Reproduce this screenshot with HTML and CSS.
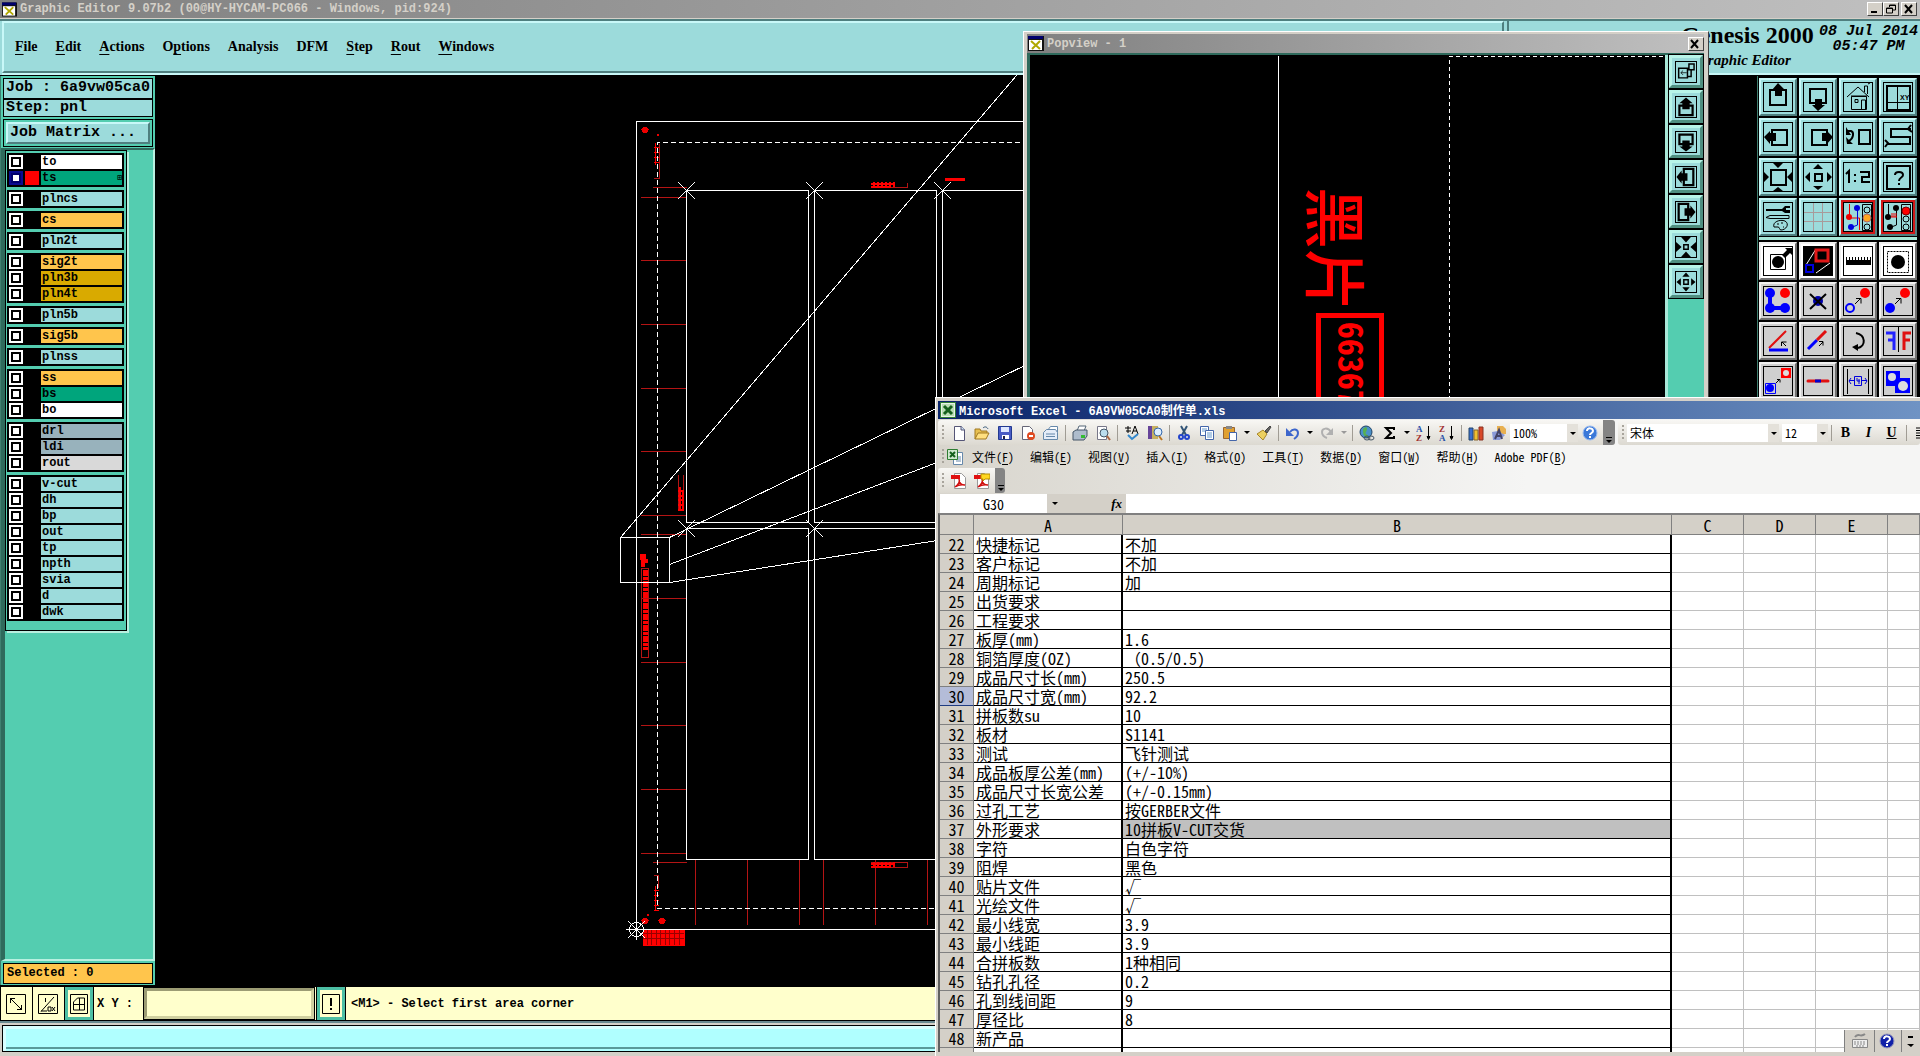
FILE: index.html
```html
<!DOCTYPE html>
<html lang="zh-CN">
<head>
    <meta charset="UTF-8">
    <title>Graphic Editor 9.07b2</title>
    <link rel="stylesheet" href="styles.css">
</head>
<body>
    <!-- shared icon shapes -->
    <svg class="defs" width="0" height="0">
        <symbol id="up" viewBox="0 0 30 30"><path d="M7 8h16v15H7z" fill="none" stroke="#000" stroke-width="2"/><path d="M15 1l7 7h-3v6h-7V8H9z"/></symbol>
        <symbol id="down" viewBox="0 0 30 30"><path d="M7 7h16v14H7z" fill="none" stroke="#000" stroke-width="2"/><path d="M15 29l7-6h-3v-6h-7v6H9z"/></symbol>
        <symbol id="left" viewBox="0 0 30 30"><path d="M9 8h15v15H9z" fill="none" stroke="#000" stroke-width="2"/><path d="M1 15l6-6v2h6v8H7v3z"/></symbol>
        <symbol id="right" viewBox="0 0 30 30"><path d="M9 8h15v15H9z" fill="none" stroke="#000" stroke-width="2"/><path d="M30 15l-6-6v2h-5v8h5v3z"/></symbol>
        <symbol id="zoomin" viewBox="0 0 30 30"><path d="M8 8h15v15H8z" fill="none" stroke="#000" stroke-width="2"/><path d="M10 1h10l-5 5zM10 29h10l-5-4zM1 10v10l5-5zM29 10v10l-5-5z"/></symbol>
        <symbol id="zoomout" viewBox="0 0 30 30"><path d="M12 12h7v7h-7z" fill="none" stroke="#000" stroke-width="2"/><path d="M10 7h10l-5-5zM10 24h10l-5 4zM7 10v10l-5-5zM24 10v10l5-5z"/></symbol>
        <symbol id="xwin" viewBox="0 0 16 15"><path d="M0 0h16v15H0z" fill="#111"/><path d="M0 0h15v3H0z" fill="#00006c"/><path d="M1 4h13v10H1z" fill="#fff"/><path d="M3 5l9 8M12 5l-8 8" stroke="#b0a800" stroke-width="2"/></symbol>
        <symbol id="pdf" viewBox="0 0 16 16"><path d="M3.500.500h7l4 4v11h-11z" fill="#fff" stroke="#999"/><path d="M0 2h9v4H0z" fill="#e01010"/><path d="M4 14c4-3 5-6 4-8 0 4 3 6 6 6-4-1-7 0-10 2" fill="none" stroke="#d01010" stroke-width="1.500"/></symbol>
        <symbol id="excel" viewBox="0 0 16 16"><path d="M.500.500h15v15H.500z" fill="#e8f4e8" stroke="#2e7d32"/><path d="M2 2h12v12H2z" fill="#b9dcb4"/><path d="M4 4l8 8M12 4l-8 8" stroke="#14601c" stroke-width="3"/></symbol>
    </svg>

    <header class="titlebar">
        <svg width="15" height="15"><use href="#xwin"/></svg>
        <span>Graphic Editor 9.07b2 (00@HY-HYCAM-PC066 - Windows, pid:924)</span>
        <div class="win-buttons">
            <button aria-label="Minimize"><svg width="12" height="10"><path d="M2 7h6v2H2z"/></svg></button>
            <button aria-label="Restore"><svg width="12" height="10"><path d="M4.500 3V1h6v5H8M1.500 4h6v5h-6zM1 4.500h7M4 1.500h7" fill="none" stroke="#000"/></svg></button>
            <button class="close" aria-label="Close"><svg width="12" height="10"><path d="M2 1l7 8M9 1L2 9" stroke="#000" stroke-width="2"/></svg></button>
        </div>
    </header>

    <div class="top">
        <nav class="menubar">
            <a href="#"><u>F</u>ile</a>
            <a href="#"><u>E</u>dit</a>
            <a href="#"><u>A</u>ctions</a>
            <a href="#">O<u>p</u>tions</a>
            <a href="#">Analysis</a>
            <a href="#">DFM</a>
            <a href="#"><u>S</u>tep</a>
            <a href="#"><u>R</u>out</a>
            <a href="#"><u>W</u>indows</a>
        </nav>
        <div class="brand-panel">
            <div class="brand">
                <h1>Genesis 2000</h1>
                <p>Graphic Editor</p>
            </div>
            <div class="clock">08 Jul 2014<br>05:47 PM</div>
        </div>
    </div>

    <main class="work">
        <aside class="sidebar">
            <div class="job">
                <div>Job : 6a9vw05ca0</div>
                <div>Step: pnl</div>
            </div>
            <div class="matrix"><button>Job Matrix ...</button></div>
            <div class="layers-panel">
                <div class="layers">
                    <div class="group">
                        <label class="white"><input type="checkbox"><i></i><span>to</span></label>
                        <label class="green work-layer"><input type="checkbox" checked><i></i><span>ts<b>⊞</b></span></label>
                    </div>
                    <div class="group"><label><input type="checkbox"><i></i><span>plncs</span></label></div>
                    <div class="group"><label class="orange"><input type="checkbox"><i></i><span>cs</span></label></div>
                    <div class="group"><label><input type="checkbox"><i></i><span>pln2t</span></label></div>
                    <div class="group">
                        <label class="orange"><input type="checkbox"><i></i><span>sig2t</span></label>
                        <label class="gold"><input type="checkbox"><i></i><span>pln3b</span></label>
                        <label class="gold"><input type="checkbox"><i></i><span>pln4t</span></label>
                    </div>
                    <div class="group"><label><input type="checkbox"><i></i><span>pln5b</span></label></div>
                    <div class="group"><label class="orange"><input type="checkbox"><i></i><span>sig5b</span></label></div>
                    <div class="group"><label><input type="checkbox"><i></i><span>plnss</span></label></div>
                    <div class="group">
                        <label class="orange"><input type="checkbox"><i></i><span>ss</span></label>
                        <label class="green"><input type="checkbox"><i></i><span>bs</span></label>
                        <label class="white"><input type="checkbox"><i></i><span>bo</span></label>
                    </div>
                    <div class="group">
                        <label class="steel"><input type="checkbox"><i></i><span>drl</span></label>
                        <label class="steel"><input type="checkbox"><i></i><span>ldi</span></label>
                        <label class="grey"><input type="checkbox"><i></i><span>rout</span></label>
                    </div>
                    <div class="group">
                        <label><input type="checkbox"><i></i><span>v-cut</span></label>
                        <label><input type="checkbox"><i></i><span>dh</span></label>
                        <label><input type="checkbox"><i></i><span>bp</span></label>
                        <label><input type="checkbox"><i></i><span>out</span></label>
                        <label><input type="checkbox"><i></i><span>tp</span></label>
                        <label><input type="checkbox"><i></i><span>npth</span></label>
                        <label><input type="checkbox"><i></i><span>svia</span></label>
                        <label><input type="checkbox"><i></i><span>d</span></label>
                        <label><input type="checkbox"><i></i><span>dwk</span></label>
                    </div>
                </div>
            </div>
            <div class="selected">Selected : 0</div>
        </aside>

        <div class="canvas">
            <svg width="100%" height="100%">
                <g transform="translate(-155 -75)" fill="none" stroke="#fff" shape-rendering="crispEdges">
                    <!-- red tooling marks -->
                    <g stroke="#b41414">
                        <path d="M641 197.500h45M641 260.500h45M641 324.500h45M641 388.500h45M641 451.500h45M641 515.500h45M641 534.500h45M641 598.500h45M641 662.500h45M641 725.500h45M641 789.500h45M641 853.500h45M653 187.500h34M653 862.500h34"/>
                        <path d="M695.500 860v65M747.500 860v65M799.500 860v65M823.500 860v65M875.500 860v65M927.500 860v65"/>
                        <path d="M871 187.500h36v-5M871 862.500h36v5h-36M678.500 511v-36M683.500 511v-36M641.500 568.500h7v89h-7zM654 178.500h5v-35M654 875.500h4v12"/>
                    </g>
                    <g stroke="#f00">
                        <path d="M871 183.500h24M871 186.500h20M873.500 182v5M877.500 182v5M881.500 182v5M885.500 182v5M889.500 182v5M893.500 182v5" stroke-width="2"/>
                        <path d="M871 863.500h24M871 866.500h20M873.500 862v5M877.500 862v5M881.500 862v5M885.500 862v5M889.500 862v5M893.500 862v5" stroke-width="2"/>
                        <path d="M679.500 487v24M682.500 491v20M678 490.500h6M678 495.500h6M678 499.500h6M678 504.500h6M678 509.500h6" stroke-width="2"/>
                        <path d="M945 179.500h20" stroke-width="3"/>
                        <path d="M655.500 143v22M654 147.500h5M654 152.500h5M654 157.500h5M654 162.500h5M655.500 886v25M654 890.500h5M654 895.500h5M654 900.500h5M654 905.500h5M654 910.500h5"/>
                        <path d="M645.500 570v80" stroke-width="5" stroke-dasharray="6 1 3 1"/>
                        <path d="M643 930h41v15h-41z" fill="#f00"/>
                    </g>
                    <path d="M643 933.500h41M643 938.500h41M647.500 930v15M651.500 930v15M656.500 930v15M660.500 930v15M665.500 930v15M669.500 930v15M674.500 930v15M679.500 930v15" stroke="#900"/>
                    <path d="M640 554h6v5h2v4h-3v4h-4v-7h-1z" fill="#f00" stroke="none"/>
                    <g fill="#e00" stroke="none"><circle cx="645" cy="130" r="3"/><circle cx="645" cy="921" r="3"/><circle cx="662" cy="921" r="3"/><path d="M641 129h8v1h-8zM641 920h8v1h-8zM658 920h8v1h-8zM657 134h2v2h-2zM647 914h2v2h-2z"/></g>
                    <!-- panel outline and cells -->
                    <path d="M1300 121.500H636.500v808H1300"/>
                    <path d="M1300 142.500H657.500v766H1300" stroke-dasharray="5 3"/>
                    <path d="M686.500 190.500h122v332h-122zM814.500 190.500h122v332h-122zM942.500 190.500h122v332h-122zM686.500 528.500h122v331h-122zM814.500 528.500h122v331h-122z"/>
                    <path d="M678 182l17 17M695 182l-17 17M806 182l17 17M823 182l-17 17M934 182l17 17M951 182l-17 17M678 520l17 17M695 520l-17 17M806 520l17 17M823 520l-17 17"/>
                    <path d="M620.500 537.500h49v45h-49zM620.500 537.500L1017 75M669.500 537.500L1030 363M669.500 564.500L1030 427M669.500 582.500L1030 526"/>
                    <circle cx="636.500" cy="929.500" r="7"/>
                    <path d="M626 929.500h21M636.500 919v21M628 921l17 17M645 921l-17 17"/>
                </g>
            </svg>
        </div>

        <aside class="toolbox">
            <div class="tools">
                <button aria-label="Pan up"><svg viewBox="0 0 30 30"><use href="#up"/></svg></button>
                <button aria-label="Pan down"><svg viewBox="0 0 30 30"><use href="#down"/></svg></button>
                <button aria-label="Home"><svg viewBox="0 0 30 30"><path d="M8.500 27.500v-13h15v13zM4 15L15 5l11 10M8 14h16M12 20.500h3v-3h-3zM18.500 27v-9h4v9M21.500 10V4h3v8M25 2l2-1" fill="none" stroke="#000"/></svg></button>
                <button aria-label="XY view"><svg viewBox="0 0 30 30"><path d="M4 4h23v24H4z" fill="none" stroke="#000" stroke-width="2"/><path d="M14.500 4v24M4 20.500h23" stroke="#000"/><text x="17" y="18" font-size="7">XY</text></svg></button>
                <button aria-label="Pan left"><svg viewBox="0 0 30 30"><use href="#left"/></svg></button>
                <button aria-label="Pan right"><svg viewBox="0 0 30 30"><use href="#right"/></svg></button>
                <button aria-label="Previous view"><svg viewBox="0 0 30 30"><path d="M16 8h11v14H16z" fill="none" stroke="#000" stroke-width="2"/><path d="M4 9h4c3 1 3 7-2 10" fill="none" stroke="#000" stroke-width="2"/><path d="M3 5v8h5zM3 15l1 7h6z"/></svg></button>
                <button aria-label="Snake"><svg viewBox="0 0 30 30"><path d="M28 7H8v8h19v7H4M2 18l3 3-3 4M28 3l-3 4 4 3" fill="none" stroke="#000" stroke-width="2"/></svg></button>
                <button aria-label="Zoom in"><svg viewBox="0 0 30 30"><use href="#zoomin"/></svg></button>
                <button aria-label="Zoom out"><svg viewBox="0 0 30 30"><use href="#zoomout"/></svg></button>
                <button aria-label="Zoom 1:2"><svg viewBox="0 0 30 30"><path d="M3 12l3-3v12M12 12v2M12 18v2M17 10h9v5h-7v5h8" fill="none" stroke="#000" stroke-width="2"/></svg></button>
                <button aria-label="Help"><svg viewBox="0 0 30 30"><path d="M4 4h23v23H4z" fill="none" stroke="#000" stroke-width="2"/><path d="M12 13c0-4 8-4 8 0 0 3-4 2-4 6M16 21v2" fill="none" stroke="#000" stroke-width="2"/></svg></button>
                <button aria-label="Options"><svg viewBox="0 0 30 30"><path d="M3 7h16l3-3h5v2h-4v2h4v3h-5l-3-2H3z"/><path d="M3 15.500l4-2h19v3H7zM11 25c-2-5 6-8 11-6 5 3 1 9-4 9-2 0-1-3-3-3zM14 22h2M18 21h2M20 25h1" fill="none" stroke="#000"/></svg></button>
                <button aria-label="Grid"><svg viewBox="0 0 30 30"><path d="M10.500 1v28M19.500 1v28M1 10.500h28M1 19.500h28" stroke="#a89a9a"/></svg></button>
                <button class="alert" aria-label="Snap"><svg viewBox="0 0 30 30"><path d="M6.500 2v14h10v12" fill="none" stroke="#e00"/><path d="M14.500 6v17l-5 2" fill="none" stroke="#00d"/><circle cx="6" cy="15" r="3" fill="#e00"/><circle cx="14" cy="6" r="3" fill="#00d"/><circle cx="8" cy="25" r="3" fill="#00d"/><path d="M19.500 2.500h9v26h-9z" fill="none" stroke="#000"/><circle cx="24" cy="8" r="3" fill="none" stroke="#000"/><circle cx="24" cy="16" r="4" fill="#ffa820" stroke="#a66"/><circle cx="24" cy="25" r="3" fill="none" stroke="#000"/></svg></button>
                <button class="alert" aria-label="Stop"><svg viewBox="0 0 30 30"><path d="M5.500 2v12M13.500 6v17l-5 2" fill="none" stroke="#000"/><circle cx="5" cy="15" r="3"/><circle cx="13" cy="6" r="3"/><circle cx="7" cy="25" r="3"/><path d="M8 15h6M9 11v4M11 11v4M13 11v4" stroke="#e00"/><path d="M18.500 2.500h9v26h-9z" fill="none" stroke="#000"/><circle cx="23" cy="9" r="4" fill="#f00" stroke="#700"/><circle cx="23" cy="17" r="3" fill="none" stroke="#000"/><circle cx="23" cy="25" r="3" fill="none" stroke="#000"/></svg></button>
            </div>
            <div class="tools grey-tools">
                <button class="on" aria-label="Select feature"><svg viewBox="0 0 30 30"><path d="M7.500 8.500h15v15h-15z" fill="none" stroke="#000"/><circle cx="15" cy="16" r="6"/><path d="M19 9l5-5-2-2h7v7l-2-2-5 5z"/></svg></button>
                <button class="on" aria-label="Select area"><svg viewBox="0 0 30 30"><path d="M1 1h28v28H1z"/><path d="M3 19L13 3M13 27l14-10" stroke="#fff"/><path d="M13 4h12v11H13z" fill="none" stroke="#e01818" stroke-width="3"/><path d="M3 19h7v7H3z" fill="none" stroke="#00d" stroke-width="2"/></svg></button>
                <button class="on" aria-label="Measure"><svg viewBox="0 0 30 30"><path d="M3 14h25v5H3z"/><path d="M3.500 11v4M6.500 11v4M9.500 11v4M12.500 11v4M15.500 11v4M18.500 11v4M21.500 11v4M24.500 11v4M27.500 11v4" stroke="#000"/></svg></button>
                <button class="on" aria-label="Highlight"><svg viewBox="0 0 30 30"><path d="M4.500 5.500h21v21h-21z" fill="none" stroke="#000" stroke-dasharray="2 1"/><circle cx="15" cy="16" r="7"/></svg></button>
                <button aria-label="Net"><svg viewBox="0 0 30 30"><path d="M7 7v15h15" fill="none" stroke="#00f" stroke-width="4"/><g fill="#00f"><circle cx="7" cy="7" r="5"/><circle cx="7" cy="22" r="5"/><circle cx="22" cy="22" r="5"/></g><circle cx="22" cy="7" r="5" fill="#f00"/></svg></button>
                <button aria-label="Delete"><svg viewBox="0 0 30 30"><circle cx="15" cy="15" r="5" fill="#00a"/><path d="M7 8l16 15M23 8L7 23" stroke="#000" stroke-width="2"/></svg></button>
                <button aria-label="Copy"><svg viewBox="0 0 30 30"><circle cx="7" cy="22" r="4" fill="none" stroke="#00f" stroke-width="2"/><circle cx="22" cy="7" r="5" fill="#f00"/><path d="M12 18l5-5M13 12.500h5v5" fill="none" stroke="#000"/></svg></button>
                <button aria-label="Move"><svg viewBox="0 0 30 30"><circle cx="7" cy="22" r="5" fill="#00f"/><circle cx="22" cy="7" r="5" fill="#f00"/><path d="M12 18l5-5M13 12.500h5v5" fill="none" stroke="#000"/></svg></button>
                <button aria-label="Rotate"><svg viewBox="0 0 30 30"><path d="M6 22L23 5" stroke="#e01010" stroke-width="2"/><path d="M6 24h19" stroke="#00f" stroke-width="3"/><path d="M23 20l-4-4M18.500 20v-4h5" fill="none" stroke="#000"/></svg></button>
                <button aria-label="Stretch"><svg viewBox="0 0 30 30"><path d="M5 23l9-9" stroke="#00f" stroke-width="3"/><path d="M14 14l9-9" stroke="#e01010" stroke-width="3"/><path d="M16 20l4-4M16 15.500h4v4" fill="none" stroke="#000"/></svg></button>
                <button aria-label="Spin"><svg viewBox="0 0 30 30"><path d="M13 7c10 2 10 13 2 15" fill="none" stroke="#000" stroke-width="2"/><path d="M9 21l6-3v7z"/></svg></button>
                <button aria-label="Mirror"><svg viewBox="0 0 30 30"><path d="M15.500 1v25" stroke="#000"/><path d="M3 7h8v17M5 14h6" fill="none" stroke="#22f" stroke-width="3"/><path d="M28 7h-7v17M27 14h-6" fill="none" stroke="#e01010" stroke-width="3"/></svg></button>
                <button aria-label="Copy layer"><svg viewBox="0 0 30 30"><path d="M18 2h10v10H18z" fill="#f00"/><circle cx="23" cy="7" r="3" fill="#ddd"/><path d="M2.500 17.500h10v10h-10z" fill="none" stroke="#00f"/><circle cx="7" cy="22" r="4" fill="#00f"/><path d="M13 17l3-3M14 13.500h3v3" fill="none" stroke="#000"/></svg></button>
                <button aria-label="Break line"><svg viewBox="0 0 30 30"><path d="M5 15h20" stroke="#e01010" stroke-width="3" stroke-linecap="round"/><path d="M12 15h6" stroke="#00c" stroke-width="3"/></svg></button>
                <button aria-label="Distance"><svg viewBox="0 0 30 30"><path d="M4.500 3v25M25.500 3v25" stroke="#000"/><path d="M6 14.500h5M19 14.500h5M8 12l-2 3 2 3M22 12l2 3-2 3M11.500 10.500h7v9h-7zM14 12v3h3M16 13v5" fill="none" stroke="#00d"/></svg></button>
                <button aria-label="Merge"><svg viewBox="0 0 30 30"><path d="M3 5h14v7h10v15H12v-7H3z" fill="#00f"/><circle cx="9" cy="11" r="4" fill="#ddd"/><circle cx="20" cy="20" r="5" fill="#ddd"/></svg></button>
            </div>
        </aside>
    </main>

    <footer class="status">
        <button class="icon-btn" aria-label="Zoom area"><svg width="20" height="20"><path d="M.500.500h19v19H.500zM4 4l12 12M4.500 9V4.500H9M15.500 11v4.500H11" fill="none" stroke="#000"/></svg></button>
        <button class="icon-btn" aria-label="Angle"><svg width="20" height="20"><path d="M.500.500h19v19H.500zM3 17.500L16 3M3 17h6M7.500 4v4M10 13h3v4h-3zM14 13l3 4M17 13l-3 4" fill="none" stroke="#000"/></svg></button>
        <button class="icon-btn framed" aria-label="Grid"><svg width="18" height="20"><path d="M.500.500h17v19H.500zM3.500 8l4-4h7v12h-11zM3 10.500h12M9.500 4v12" fill="none" stroke="#000"/></svg></button>
        <label for="xy">X Y :</label>
        <input id="xy" type="text">
        <button class="icon-btn framed" aria-label="Warnings"><svg width="18" height="20"><path d="M.500.500h17v19H.500z" fill="none" stroke="#000"/><path d="M8 4h2v8H8zM8 14h2v2H8z"/></svg></button>
        <output>&lt;M1&gt; - Select first area corner</output>
    </footer>
    <div class="command"><div></div></div>

    <section class="popview">
        <div class="pop-title">
            <svg width="16" height="15"><use href="#xwin"/></svg>
            <span>Popview - 1</span>
            <button aria-label="Close"><svg width="12" height="10"><path d="M2 1l7 8M9 1L2 9" stroke="#000" stroke-width="2"/></svg></button>
        </div>
        <div class="pop-body">
            <svg class="pop-canvas" width="636" height="360">
                <g transform="translate(-1030 -56)" shape-rendering="crispEdges">
                    <path d="M1278.500 57v400" stroke="#fff"/>
                    <path d="M1449.500 457V57.500H1666" fill="none" stroke="#fff" stroke-dasharray="4 3"/>
                    <path d="M1318.500 457V316.500h63V457" fill="none" stroke="#f00" stroke-width="5"/>
                </g>
                <g class="mark">
                    <text class="hei" transform="translate(281 132) rotate(90)">黑片</text>
                    <text class="num" transform="translate(308 267) rotate(90)">66367</text>
                </g>
            </svg>
            <div class="pop-tools">
                <button aria-label="Link view"><svg viewBox="0 0 30 30"><path d="M5 10h12v13H5zM19 4h7v8h-7zM17 21h5v-9" fill="none" stroke="#000" stroke-width="2"/><path d="M8 16h8M8 16l3-3M8 16l3 3" stroke="#000"/></svg></button>
                <button aria-label="Up"><svg viewBox="0 0 30 30"><path d="M6 13h18v13H6z" fill="none" stroke="#000" stroke-width="3"/><path d="M15 2l9 8h-4v8H10v-8H6z"/></svg></button>
                <button aria-label="Down"><svg viewBox="0 0 30 30"><path d="M6 5h18v13H6z" fill="none" stroke="#000" stroke-width="3"/><path d="M15 28l9-7h-4v-8H10v8H6z"/></svg></button>
                <button aria-label="Left"><svg viewBox="0 0 30 30"><path d="M12 4h13v22H12z" fill="none" stroke="#000" stroke-width="3"/><path d="M2 15l7-9v4h8v10H9v4z"/></svg></button>
                <button aria-label="Right"><svg viewBox="0 0 30 30"><path d="M5 4h13v22H5z" fill="none" stroke="#000" stroke-width="3"/><path d="M28 15l-7-9v4h-8v10h8v4z"/></svg></button>
                <button aria-label="Zoom in"><svg viewBox="0 0 30 30"><path d="M8 1h14l-7 8zM8 29h14l-7-8zM1 8v14l8-7zM29 8v14l-8-7z"/><path d="M12 12h6v6h-6z" fill="none" stroke="#000" stroke-width="2"/></svg></button>
                <button aria-label="Zoom out"><svg viewBox="0 0 30 30"><path d="M10 8h10l-5-6zM10 22h10l-5 6zM8 10v10l-6-5zM22 10v10l6-5z"/><path d="M12 12h6v6h-6z" fill="none" stroke="#000" stroke-width="2"/></svg></button>
            </div>
        </div>
    </section>

    <section class="excel">
        <div class="xl-title">
            <svg width="16" height="16"><use href="#excel"/></svg>
            <span>Microsoft Excel - 6A9VW05CA0制作单.xls</span>
        </div>
        <div class="xl-bars">
            <div class="bar-row">
                <div class="bar std">
                    <span class="grip"></span>
                    <button aria-label="New"><svg viewBox="0 0 16 16"><path d="M3.500 1.500h7l3 3v11h-10z" fill="#fff" stroke="#557"/><path d="M10 1v4h4" fill="#cde" stroke="#557"/></svg></button>
                    <button aria-label="Open"><svg viewBox="0 0 16 16"><path d="M1 14V4h5l1 2h6v3" fill="#e8c050" stroke="#a07820"/><path d="M1 14l3-6h11l-3 6z" fill="#ffe080" stroke="#a07820"/><path d="M9 3c2-2 4-1 5 1" fill="none" stroke="#357"/></svg></button>
                    <button aria-label="Save"><svg viewBox="0 0 16 16"><path d="M1.500 1.500h13v13h-13z" fill="#4a5cc4" stroke="#223a90"/><path d="M4 2h8v5H4z" fill="#dfe8ff"/><path d="M5 10h7v4H5z" fill="#fff"/><path d="M6 11h2v3H6z" fill="#224"/></svg></button>
                    <button aria-label="Permission"><svg viewBox="0 0 16 16"><path d="M2.500 1.500h7l3 3v10h-10z" fill="#fff" stroke="#667"/><circle cx="11" cy="11" r="4" fill="#e04a20"/><path d="M9 11h4" stroke="#fff" stroke-width="2"/></svg></button>
                    <button aria-label="Mail"><svg viewBox="0 0 16 16"><path d="M4.500 5.500l3-4h7v7" fill="#fff" stroke="#68a"/><path d="M.500 7.500l3-3h9l2 3v7h-14z" fill="#e4ecf8" stroke="#68a"/><path d="M3 9h9M3 11.500h9" stroke="#68a"/></svg></button>
                    <span class="sep"></span>
                    <button aria-label="Print"><svg viewBox="0 0 16 16"><path d="M5 6l2-5h7l-2 5z" fill="#fff" stroke="#567"/><path d="M1 7l3-2h11v6l-3 4H1z" fill="#aebccc" stroke="#456"/><path d="M9 10h4v3H9z" fill="#3b3"/></svg></button>
                    <button aria-label="Preview"><svg viewBox="0 0 16 16"><path d="M2.500 1.500h9v13h-9z" fill="#fff" stroke="#778"/><circle cx="9" cy="8" r="4" fill="#bde" stroke="#456"/><path d="M12 11l3 4" stroke="#a64" stroke-width="2"/></svg></button>
                    <span class="sep"></span>
                    <button aria-label="Spelling"><svg viewBox="0 0 16 16"><path d="M1 3h6M4 1v7M2 6h5M8 9l3-8 3 8M9 6h4" fill="none" stroke="#000"/><path d="M4 10l4 4 6-5" fill="none" stroke="#38c" stroke-width="2"/></svg></button>
                    <button aria-label="Research"><svg viewBox="0 0 16 16"><path d="M1 1h4v13H1z" fill="#649"/><path d="M5 1h6v13H5z" fill="#c7b060"/><circle cx="11" cy="7" r="4" fill="#def" stroke="#36a"/><path d="M12 11l3 4" stroke="#b72" stroke-width="2"/></svg></button>
                    <span class="sep"></span>
                    <button aria-label="Cut"><svg viewBox="0 0 16 16"><path d="M5 1l5 9M11 1l-5 9" stroke="#357" stroke-width="2"/><circle cx="5" cy="12" r="2" fill="none" stroke="#24c" stroke-width="2"/><circle cx="11" cy="12" r="2" fill="none" stroke="#24c" stroke-width="2"/></svg></button>
                    <button aria-label="Copy"><svg viewBox="0 0 16 16"><path d="M1.500 1.500h8v9h-8z" fill="#fff" stroke="#46a"/><path d="M6.500 5.500h8v9h-8z" fill="#fff" stroke="#46a"/><path d="M3 4h5M3 6h3M8 8h5M8 10h5M8 12h5" stroke="#69c"/></svg></button>
                    <button aria-label="Paste"><svg viewBox="0 0 16 16"><path d="M1.500 2.500h11v11h-11z" fill="#e0a030" stroke="#963"/><path d="M4 1h6v3H4z" fill="#888"/><path d="M7.500 7.500h7v8h-7z" fill="#fff" stroke="#46a"/></svg></button>
                    <span class="arrow"></span>
                    <button aria-label="Format painter"><svg viewBox="0 0 16 16"><path d="M1 9l6-4 4 4-4 6z" fill="#ecd060" stroke="#a8862a"/><path d="M9 6l5-5 1 1-4 6z" fill="#666" stroke="#444"/></svg></button>
                    <span class="sep"></span>
                    <button aria-label="Undo"><svg viewBox="0 0 16 16"><path d="M5 7c3-4 8-3 8 1 0 2-1 4-4 6" fill="none" stroke="#3d66cc" stroke-width="2"/><path d="M1 3v8h8z" fill="#3d66cc"/></svg></button>
                    <span class="arrow"></span>
                    <button aria-label="Redo"><svg viewBox="0 0 16 16"><path d="M12 7C9 2 3 3 3 7c0 3 2 5 5 6" fill="none" stroke="#b0b0b0" stroke-width="2"/><path d="M14 3v7H7z" fill="#b0b0b0"/></svg></button>
                    <span class="arrow off"></span>
                    <span class="sep"></span>
                    <button aria-label="Hyperlink"><svg viewBox="0 0 16 16"><circle cx="7" cy="7" r="6" fill="#4a90c8" stroke="#246"/><path d="M4 4c4-4 5 0 3 3s3 2 2 5c-5 0-5-4-5-8" fill="#58b050"/><ellipse cx="8" cy="13" rx="3" ry="2" fill="none" stroke="#456"/><ellipse cx="12" cy="13" rx="3" ry="2" fill="none" stroke="#456"/></svg></button>
                    <button aria-label="Sum"><svg viewBox="0 0 16 16"><path d="M12 5V3H4l5 5-5 5h8v-2" fill="none" stroke="#000" stroke-width="2"/></svg></button>
                    <span class="arrow"></span>
                    <button aria-label="Sort ascending"><svg viewBox="0 0 16 16"><text x="0" y="7" font-size="9" fill="#2850a8">A</text><text x="0" y="16" font-size="9" fill="#a03030">Z</text><path d="M12.500 1v12M11 11.500l1.500 3 1.500-3z" stroke="#000"/></svg></button>
                    <button aria-label="Sort descending"><svg viewBox="0 0 16 16"><text x="0" y="7" font-size="9" fill="#a03030">Z</text><text x="0" y="16" font-size="9" fill="#2850a8">A</text><path d="M12.500 1v12M11 11.500l1.500 3 1.500-3z" stroke="#000"/></svg></button>
                    <span class="sep"></span>
                    <button aria-label="Chart"><svg viewBox="0 0 16 16"><path d="M1 3h4v12H1z" fill="#3a6ed0" stroke="#246"/><path d="M6 5h4v10H6z" fill="#f0c030" stroke="#863"/><path d="M11 2h4v13h-4z" fill="#d84828" stroke="#832"/></svg></button>
                    <button aria-label="Drawing"><svg viewBox="0 0 16 16"><path d="M6 1h6l3 3v5H6z" fill="#e8b050"/><path d="M1 7l6-1 7 4-5 5H2z" fill="#8a9ad8"/><path d="M4 14L8 5l3 9M6 11h4" fill="none" stroke="#446" stroke-width="2"/></svg></button>
                    <span class="combo zoom"><select aria-label="Zoom"><option>100%</option></select></span>
                    <button aria-label="Help"><svg viewBox="0 0 16 16"><circle cx="8" cy="8" r="7" fill="#3a78d8" stroke="#9bbcf0"/><path d="M5 6c0-4 6-3 6 0 0 2-3 2-3 4M8 11v2" fill="none" stroke="#fff" stroke-width="2"/></svg></button>
                    <button class="more" aria-label="More buttons"></button>
                </div>
                <div class="bar fmt">
                    <span class="grip"></span>
                    <span class="combo font"><select aria-label="Font"><option>宋体</option></select></span>
                    <span class="combo size"><select aria-label="Size"><option>12</option></select></span>
                    <span class="sep"></span>
                    <button class="letter"><b>B</b></button>
                    <button class="letter"><i>I</i></button>
                    <button class="letter"><u>U</u></button>
                    <span class="sep"></span>
                    <button aria-label="Align left"><svg viewBox="0 0 16 16"><path d="M3 3h13M3 5.500h9M3 8h13M3 10.500h9M3 13h13" stroke="#000"/></svg></button>
                </div>
            </div>
            <nav class="xl-menu">
                <span class="grip"></span>
                <svg width="16" height="16"><path d="M6.500 3.500h9v12h-9z" fill="#fff" stroke="#68a"/><path d="M9 8h5M9 10h5M9 12h5" stroke="#68a"/><path d="M.500.500h10v10H.500z" fill="#cfe8cf" stroke="#2e7d32"/><path d="M3 3l5 5M8 3L3 8" stroke="#14601c" stroke-width="2"/></svg>
                <a href="#">文件(<u>F</u>)</a>
                <a href="#">编辑(<u>E</u>)</a>
                <a href="#">视图(<u>V</u>)</a>
                <a href="#">插入(<u>I</u>)</a>
                <a href="#">格式(<u>O</u>)</a>
                <a href="#">工具(<u>T</u>)</a>
                <a href="#">数据(<u>D</u>)</a>
                <a href="#">窗口(<u>W</u>)</a>
                <a href="#">帮助(<u>H</u>)</a>
                <a href="#">Adobe PDF(<u>B</u>)</a>
            </nav>
            <div class="bar pdf-bar">
                <span class="grip"></span>
                <button aria-label="Convert to PDF"><svg viewBox="0 0 16 16"><use href="#pdf"/></svg></button>
                <button aria-label="PDF and review"><svg viewBox="0 0 16 16"><use href="#pdf"/><path d="M7 1h9v5h-5l-2 2V6H7z" fill="#ffd820" stroke="#b89000"/></svg></button>
                <button class="more" aria-label="More buttons"></button>
            </div>
        </div>
        <div class="formula">
            <input class="name" type="text" value="G30" aria-label="Name box">
            <span class="arrow"></span>
            <i>fx</i>
            <input class="fx" type="text" aria-label="Formula">
        </div>
        <div class="sheet">
            <table>
                <colgroup><col class="c-row"><col class="c-a"><col class="c-b"><col class="c-n"><col class="c-n"><col class="c-n"><col></colgroup>
                <thead>
                    <tr><th></th><th>A</th><th>B</th><th>C</th><th>D</th><th>E</th><th></th></tr>
                </thead>
                <tbody>
                    <tr><th>22</th><td>快捷标记</td><td>不加</td><td></td><td></td><td></td><td></td></tr>
                    <tr><th>23</th><td>客户标记</td><td>不加</td><td></td><td></td><td></td><td></td></tr>
                    <tr><th>24</th><td>周期标记</td><td>加</td><td></td><td></td><td></td><td></td></tr>
                    <tr><th>25</th><td>出货要求</td><td></td><td></td><td></td><td></td><td></td></tr>
                    <tr><th>26</th><td>工程要求</td><td></td><td></td><td></td><td></td><td></td></tr>
                    <tr><th>27</th><td>板厚(mm)</td><td>1.6</td><td></td><td></td><td></td><td></td></tr>
                    <tr><th>28</th><td>铜箔厚度(OZ)</td><td>（0.5/0.5)</td><td></td><td></td><td></td><td></td></tr>
                    <tr><th>29</th><td>成品尺寸长(mm)</td><td>250.5</td><td></td><td></td><td></td><td></td></tr>
                    <tr class="current"><th>30</th><td>成品尺寸宽(mm)</td><td>92.2</td><td></td><td></td><td></td><td></td></tr>
                    <tr><th>31</th><td>拼板数su</td><td>10</td><td></td><td></td><td></td><td></td></tr>
                    <tr><th>32</th><td>板材</td><td>S1141</td><td></td><td></td><td></td><td></td></tr>
                    <tr><th>33</th><td>测试</td><td>飞针测试</td><td></td><td></td><td></td><td></td></tr>
                    <tr><th>34</th><td>成品板厚公差(mm)</td><td>(+/-10%)</td><td></td><td></td><td></td><td></td></tr>
                    <tr><th>35</th><td>成品尺寸长宽公差</td><td>(+/-0.15mm)</td><td></td><td></td><td></td><td></td></tr>
                    <tr><th>36</th><td>过孔工艺</td><td>按GERBER文件</td><td></td><td></td><td></td><td></td></tr>
                    <tr><th>37</th><td>外形要求</td><td class="shade">10拼板V-CUT交货</td><td></td><td></td><td></td><td></td></tr>
                    <tr><th>38</th><td>字符</td><td>白色字符</td><td></td><td></td><td></td><td></td></tr>
                    <tr><th>39</th><td>阻焊</td><td>黑色</td><td></td><td></td><td></td><td></td></tr>
                    <tr><th>40</th><td>贴片文件</td><td>√</td><td></td><td></td><td></td><td></td></tr>
                    <tr><th>41</th><td>光绘文件</td><td>√</td><td></td><td></td><td></td><td></td></tr>
                    <tr><th>42</th><td>最小线宽</td><td>3.9</td><td></td><td></td><td></td><td></td></tr>
                    <tr><th>43</th><td>最小线距</td><td>3.9</td><td></td><td></td><td></td><td></td></tr>
                    <tr><th>44</th><td>合拼板数</td><td>1种相同</td><td></td><td></td><td></td><td></td></tr>
                    <tr><th>45</th><td>钻孔孔径</td><td>0.2</td><td></td><td></td><td></td><td></td></tr>
                    <tr><th>46</th><td>孔到线间距</td><td>9</td><td></td><td></td><td></td><td></td></tr>
                    <tr><th>47</th><td>厚径比</td><td>8</td><td></td><td></td><td></td><td></td></tr>
                    <tr><th>48</th><td>新产品</td><td></td><td></td><td></td><td></td><td></td></tr>
                    <tr><th></th><td></td><td></td><td></td><td></td><td></td><td></td></tr>
                </tbody>
            </table>
        </div>
        <div class="langbar">
            <button aria-label="Keyboard"><svg width="16" height="16"><path d="M.500 6.500h15v8H.500z" fill="#eee" stroke="#888"/><path d="M2 9h12M2 11h12M4 13h8" stroke="#888" stroke-dasharray="2 1"/><path d="M3 4c3-5 5 1 10-3" fill="none" stroke="#888" stroke-width="2"/></svg></button>
            <button aria-label="Help"><svg width="16" height="16"><circle cx="8" cy="8" r="7" fill="#1020a8" stroke="#99b"/><path d="M5 6c0-4 6-3 6 0 0 2-3 2-3 4M8 11v2" fill="none" stroke="#fff" stroke-width="2"/></svg></button>
            <button class="opts" aria-label="Options"><svg width="8" height="14"><path d="M2 2h5v2H2zM1 10h7l-3 3z"/></svg></button>
        </div>
    </section>
</body>
</html>
```
FILE: styles.css
```css
* {
    box-sizing: border-box;
}
body {
    margin: 0;
    height: 100vh;
    display: flex;
    flex-direction: column;
    position: relative;
    overflow: hidden;
    background: #000;
    font: bold 12px "Liberation Mono", "Noto Sans CJK SC", monospace;
}
button, input, select {
    font: inherit;
    color: inherit;
    margin: 0;
    padding: 0;
    border: 0;
    border-radius: 0;
    background: none;
}
a {
    color: #000;
    text-decoration: none;
}
svg {
    display: block;
}
.defs {
    position: absolute;
}

/* main window */
.titlebar {
    display: flex;
    align-items: center;
    gap: 3px;
    height: 19px;
    padding: 0 3px 0 2px;
    background: linear-gradient(to right, #808080, #c0c0c0);
    border-bottom: 1px solid #d4d0c8;
    color: #d4d0c8;
    flex: none;
}
.win-buttons {
    display: flex;
    margin-left: auto;
}
.win-buttons button, .pop-title button {
    width: 16px;
    height: 14px;
    background: #d4d0c8;
    border: 1px solid;
    border-color: #fff #404040 #404040 #fff;
}
.win-buttons svg {
    margin-left: 1px;
}
.win-buttons .close {
    margin-left: 2px;
}
.top {
    display: flex;
    height: 56px;
    flex: none;
    border-top: 2px solid #4f7f7f;
    background: #9cdbdb;
}
.menubar {
    flex: 1;
    display: flex;
    align-items: center;
    gap: 18px;
    margin: 0 0 2px 2px;
    padding: 0 11px;
    border: 2px solid;
    border-color: #c8f8f8 #4f7f7f #4f7f7f #c8f8f8;
    box-shadow: 0 2px #c8f8f8;
    font: bold 14px "Liberation Serif", serif;
}
.menubar u {
    text-underline-offset: 3px;
}
.brand-panel {
    width: 413px;
    margin-left: 3px;
    display: flex;
    justify-content: flex-end;
    gap: 5px;
    padding-right: 2px;
    border-left: 2px solid #4f7f7f;
    border-bottom: 2px solid #c8f8f8;
}
.brand {
    width: 133px;
    font-family: "Liberation Serif", serif;
}
.brand h1 {
    margin: 0;
    font-size: 24px;
    line-height: 28px;
}
.brand p {
    margin: 0;
    padding-left: 16px;
    font-style: italic;
    font-size: 15px;
    line-height: 22px;
}
.clock {
    font-size: 15px;
    font-style: italic;
    line-height: 15px;
    text-align: center;
    padding-top: 3px;
}
.work {
    flex: 1;
    min-height: 0;
    display: flex;
}

/* layer list on the left */
.sidebar {
    width: 155px;
    display: flex;
    flex-direction: column;
    background: #54cdb0;
    margin: 1px 0 2px;
    border-left: 1px solid #3f8070;
}
.job {
    margin: 2px 2px 0;
    border: 1px solid #000;
    font-size: 15px;
}
.job div {
    height: 19px;
    padding-left: 2px;
    line-height: 18px;
    background: #9cdbdb;
    white-space: nowrap;
}
.job div + div {
    border-top: 2px solid #000;
    height: 18px;
    line-height: 15px;
}
.matrix {
    margin: 2px 2px 0;
    padding: 2px;
    border: 1px solid #000;
}
.matrix button {
    display: block;
    width: 100%;
    height: 22px;
    padding-left: 2px;
    text-align: left;
    font-size: 15px;
    line-height: 18px;
    background: #9cdbdb;
    border: 2px solid;
    border-color: #c8f8f8 #4f7f7f #4f7f7f #c8f8f8;
}
.layers-panel {
    flex: 1;
    margin-top: 1px;
    border-top: 2px solid #2f6a5c;
    border-left: 4px solid #2f6a5c;
    border-right: 2px solid #b8f0e0;
    border-bottom: 2px solid #b8f0e0;
}
.layers {
    width: 122px;
    height: 481px;
    padding: 2px 2px 0 1px;
    display: flex;
    flex-direction: column;
    gap: 3px;
    border: 1px solid #000;
    box-shadow: 2px 2px #b8f0e0;
}
.group {
    padding: 2px 2px 0;
    background: #000;
}
.group label {
    display: flex;
    gap: 2px;
    height: 14px;
    margin-bottom: 2px;
}
.group input {
    appearance: none;
    width: 14px;
    height: 14px;
    background: #fff;
    border: 2px solid #fff;
    box-shadow: inset 0 0 0 2px #000;
}
.group i {
    width: 14px;
}
.group span {
    flex: 1;
    display: flex;
    justify-content: space-between;
    padding-left: 1px;
    line-height: 14px;
    background: #9cdbdb;
}
.group span b {
    font-size: 8px;
}
.group .white span { background: #fff; }
.group .green span { background: #00a57c; }
.group .orange span { background: #ffc54c; }
.group .gold span { background: #d9aa00; }
.group .steel span { background: #98b2bc; }
.group .grey span { background: #d9d9d9; }
.work-layer i { background: #f00; }
.group .work-layer input {
    border-color: #0a0a90;
    box-shadow: inset 0 0 0 2px #00006c;
}
.selected {
    height: 21px;
    margin: 2px 2px 1px;
    padding-left: 3px;
    line-height: 19px;
    background: #ffc54c;
    border: 1px solid #000;
}
.canvas {
    flex: 1;
    overflow: hidden;
}

/* tool icons */
.toolbox {
    width: 163px;
    margin-top: 1px;
    padding: 2px 3px 0 1px;
    border-left: 1px solid #3f8070;
    background: #000;
}
.tools {
    display: grid;
    grid-template-columns: repeat(4, 38px);
    gap: 2px;
    padding-bottom: 1px;
    border-bottom: 3px solid #a8e8d8;
}
.grey-tools {
    padding-top: 2px;
    border: 0;
}
.tools button {
    height: 38px;
    padding: 2px;
    background: #9cdbdb;
    border: 2px solid;
    border-color: #c8f8f8 #4f7f7f #4f7f7f #c8f8f8;
}
.tools svg {
    width: 30px;
    height: 30px;
    outline: 1px solid #000;
    outline-offset: -1px;
    font-family: "Liberation Sans", sans-serif;
}
.tools .alert {
    box-shadow: inset 0 0 0 2px #d01818;
}
.grey-tools button {
    background: #cfcfcf;
    border-color: #f0f0f0 #707070 #707070 #f0f0f0;
}
.grey-tools .on {
    background: #fff;
}

/* status line */
.status {
    display: flex;
    height: 34px;
    flex: none;
    align-items: stretch;
    background: #ffffcc;
    border-bottom: 1px solid #000;
    padding-left: 1px;
}
.icon-btn {
    width: 31px;
    padding: 3px;
    margin-right: 1px;
    border: 2px solid #ffffcc;
    outline: 1px solid #000;
}
.icon-btn.framed {
    width: 28px;
    padding: 3px 2px;
    border: 3px solid #4cbfa4;
}
.status label {
    width: 50px;
    padding-left: 3px;
    line-height: 34px;
}
.status input {
    width: 170px;
    margin: 1px 3px 1px 0;
    padding: 0 8px;
    border: 3px solid;
    border-color: #9c9c74 #d0d0a0 #d0d0a0 #9c9c74;
    outline: 1px solid #000;
}
.status output {
    padding-left: 5px;
    line-height: 34px;
}
.command {
    height: 35px;
    flex: none;
    padding: 2px 0 3px 2px;
    background: #d4d0c8;
    border-top: 2px solid #6a8a90;
}
.command div {
    height: 27px;
    background: #b0ffff;
    border: 1px solid #000;
    box-shadow: inset 3px 3px #d8ffff, inset 0 -2px #b0ffff, inset 0 -4px #5a9a9a;
}

/* popview window */
.popview {
    position: absolute;
    left: 1023px;
    top: 31px;
    width: 686px;
    height: 380px;
    padding: 2px 4px 0 3px;
    background: #d4d0c8;
    border: 1px solid;
    border-color: #fff #404040 #404040 #fff;
}
.pop-title {
    display: flex;
    align-items: center;
    gap: 3px;
    height: 19px;
    padding: 0 0 0 1px;
    background: linear-gradient(to right, #808080, #c0c0c0);
    color: #d4d0c8;
}
.pop-title button {
    margin-left: auto;
}
.pop-body {
    display: flex;
    height: 346px;
    border-top: 2px solid #2f6a5c;
    border-left: 3px solid #2f6a5c;
}
.pop-canvas {
    flex: 1;
    background: #000;
    border-right: 3px solid #a8e8d8;
}
.mark {
    fill: #f00;
}
.hei {
    font: 500 62px "Noto Sans CJK SC", sans-serif;
}
.num {
    font: bold 34px "Noto Sans Mono CJK SC", "Noto Sans CJK SC", sans-serif;
}
.pop-tools {
    width: 36px;
    padding: 0 1px;
    background: #54cdb0;
}
.pop-tools button {
    display: block;
    width: 34px;
    height: 33px;
    margin-bottom: 2px;
    padding: 2px 3px;
    background: #9cdbdb;
    border: 3px solid;
    border-color: #b8f4e8 #4f8f80 #4f8f80 #b8f4e8;
    outline: 1px solid #000;
}
.pop-tools svg {
    width: 22px;
    height: 22px;
    outline: 1px solid #000;
    outline-offset: -1px;
}

/* excel window */
.excel {
    position: absolute;
    left: 935px;
    top: 397px;
    right: 0;
    bottom: 0;
    display: flex;
    flex-direction: column;
    padding: 3px 0 4px 2px;
    background: #d4d0c8;
    border-left: 1px solid #fff;
    border-top: 1px solid #fff;
    font: normal 12px "Noto Sans Mono CJK SC", "Noto Sans CJK SC", sans-serif;
}
.xl-title {
    display: flex;
    align-items: center;
    gap: 3px;
    height: 18px;
    flex: none;
    padding-left: 2px;
    color: #fff;
    background: linear-gradient(to right, #0a246a, #6f93c4);
    font: bold 12px "Liberation Mono", "Noto Sans CJK SC", monospace;
}
.xl-bars {
    flex: none;
    height: 75px;
    background: linear-gradient(to right, #d8d5cd, #f5f5f4 60%);
}
.bar-row {
    display: flex;
    gap: 3px;
    padding-top: 1px;
}
.bar {
    display: flex;
    align-items: center;
    height: 25px;
    padding-left: 3px;
    background: linear-gradient(#f8f7f4, #dcd9d1);
    border-radius: 3px;
    overflow: hidden;
}
.bar button {
    width: 23px;
    height: 22px;
    flex: none;
}
.bar svg {
    width: 16px;
    height: 16px;
    margin: 0 auto;
    font: bold 9px "Liberation Serif", serif;
}
.std {
    flex: none;
}
.fmt {
    flex: 1;
    min-width: 0;
}
.grip {
    flex: none;
    width: 2px;
    height: 16px;
    margin: 0 3px 0 1px;
    background: repeating-linear-gradient(#a8a49c 0 2px, transparent 2px 4px);
}
.sep {
    flex: none;
    width: 1px;
    height: 16px;
    margin: 0 2px 0 3px;
    background: #a09c94;
}
.arrow {
    flex: none;
    width: 11px;
    display: flex;
    justify-content: center;
}
.arrow::before, .combo::after {
    content: "";
    border: 3px solid transparent;
    border-top-color: #000;
    border-bottom: 0;
}
.arrow.off::before {
    border-top-color: #999;
}
.combo {
    position: relative;
    flex: none;
    height: 18px;
    background: #fff;
    border-right: 11px solid #e4e1da;
}
.combo::after {
    position: absolute;
    right: -9px;
    top: 8px;
}
.combo select {
    appearance: none;
    width: 100%;
    height: 18px;
    padding-left: 3px;
    line-height: 16px;
}
.zoom { width: 68px; }
.font { width: 152px; margin-right: 3px; }
.size { width: 46px; }
.bar .more {
    width: 12px;
    height: 25px;
    margin-left: 2px;
    background: #848484;
}
.more::before {
    content: "";
    display: block;
    width: 6px;
    margin: 14px auto 0;
    border-top: 1px solid #000;
}
.more::after {
    content: "";
    display: block;
    width: 0;
    margin: 2px auto 0;
    border: 3px solid transparent;
    border-top-color: #000;
    border-bottom: 0;
}
.bar .letter {
    font: bold 14px "Liberation Serif", serif;
}
.xl-menu {
    display: flex;
    align-items: center;
    height: 23px;
    padding-left: 3px;
}
.xl-menu svg {
    margin-right: 1px;
}
.xl-menu a {
    padding: 0 8px;
    white-space: nowrap;
}
.xl-menu u {
    text-underline-offset: 2px;
}
.pdf-bar {
    width: 67px;
}
.formula {
    display: flex;
    align-items: center;
    height: 19px;
    flex: none;
}
.formula input {
    height: 19px;
    background: #fff;
}
.formula .name {
    width: 107px;
    margin-left: 2px;
    text-align: center;
    font-size: 14px;
}
.formula .arrow {
    width: 16px;
}
.formula i {
    flex: none;
    width: 63px;
    padding-right: 4px;
    text-align: right;
    font: italic bold 13px "Liberation Serif", serif;
}
.formula .fx {
    flex: 1;
}
.sheet {
    flex: 1;
    min-height: 0;
    overflow: hidden;
    background: #fff;
    border-top: 2px solid #808080;
    border-left: 2px solid #606060;
}
table {
    width: 100%;
    table-layout: fixed;
    border-collapse: separate;
    border-spacing: 0;
    font-size: 16px;
}
.c-row { width: 34px; }
.c-a { width: 149px; }
.c-b { width: 549px; }
.c-n { width: 72px; }
th {
    height: 19px;
    padding: 0;
    font-weight: normal;
    line-height: 18px;
    background: #d4d0c8;
    border-right: 1px solid #808080;
    border-bottom: 1px solid #808080;
}
thead th {
    height: 20px;
}
td {
    height: 19px;
    padding: 0 0 0 2px;
    line-height: 18px;
    white-space: nowrap;
    border-right: 1px solid #c0c0c0;
    border-bottom: 1px solid #c0c0c0;
}
td:nth-child(2), td:nth-child(3) {
    border-right: 2px solid #000;
    border-bottom-color: #000;
}
.current th {
    background: #b4bcd8;
    border-bottom-color: #203c80;
}
.shade {
    background: #c0c0c0;
}
.langbar {
    position: absolute;
    right: 0;
    bottom: 4px;
    display: flex;
    width: 76px;
    height: 22px;
    padding-left: 3px;
    background: #d4d0c8;
    border-left: 1px solid #808080;
}
.langbar button {
    width: 27px;
    padding-left: 4px;
    border-right: 1px solid #808080;
}
.langbar .opts {
    width: 18px;
    border: 0;
}
```
